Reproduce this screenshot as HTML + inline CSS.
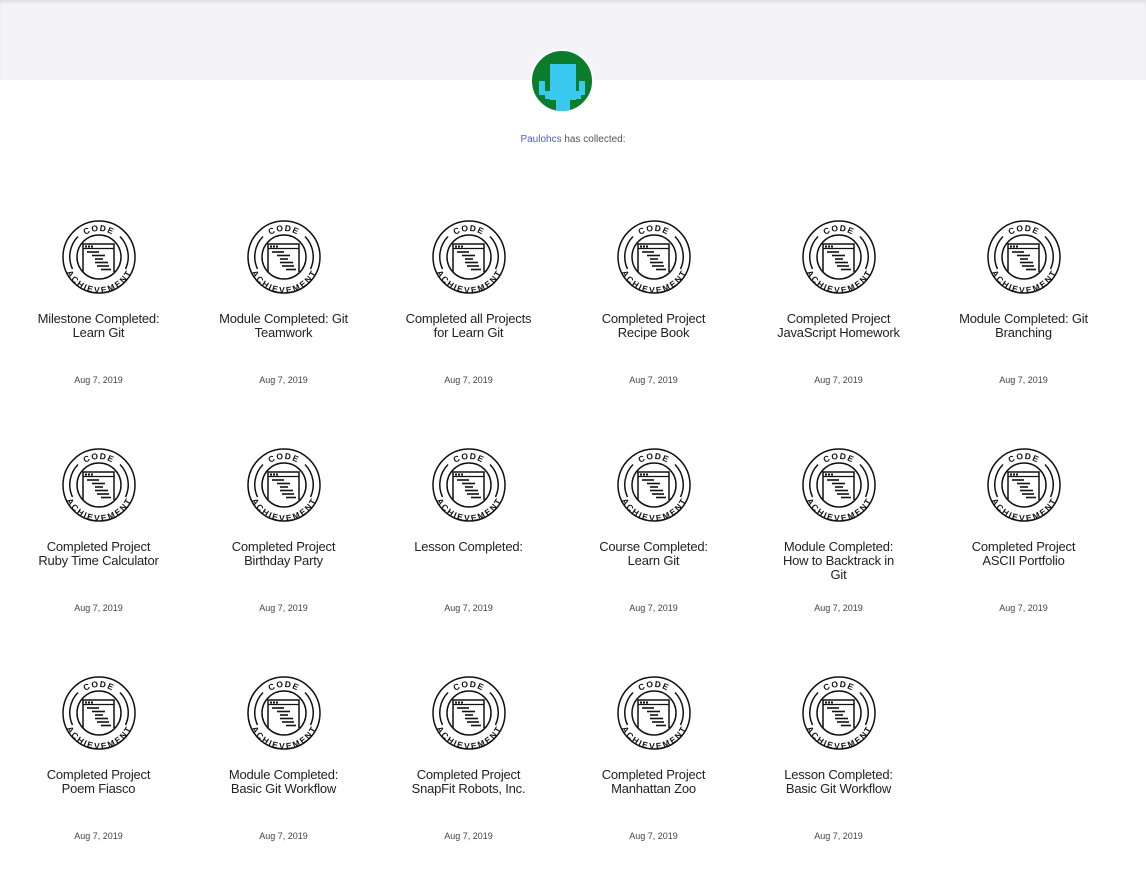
<!DOCTYPE html>
<html><head><meta charset="utf-8"><style>
body{margin:0;width:1146px;height:877px;background:#fff;font-family:"Liberation Sans",sans-serif;position:relative;overflow:hidden}
.hdr{position:absolute;left:0;top:0;width:1146px;height:80px;background:#f4f4f8;box-shadow:inset 0 3px 3px -1px #ddd}
.av{position:absolute;left:530px;top:49px;width:60px;height:60px;border-radius:50%;background:#0b7c2c;border:2px solid #fff;overflow:hidden}
.av i{position:absolute;background:#38c8f0}
.who{position:absolute;top:134px;left:0;width:1146px;text-align:center;font-size:10px;color:#555}
.who span{color:#4a5fd8}
.card{position:absolute;width:185px;text-align:center}
.card svg{display:block;margin:0 auto}
.t{font-size:13px;color:#222;line-height:14px;margin-top:15px;height:56px;padding:0 27px;letter-spacing:-0.2px}
.d{font-size:9px;color:#444;margin-top:7px}
</style></head><body>
<div class="hdr"></div>
<div class="av"><i style="left:18px;top:13px;width:26px;height:36px"></i><i style="left:7px;top:30px;width:6px;height:14px"></i><i style="left:47px;top:30px;width:6px;height:14px"></i><i style="left:13px;top:40px;width:36px;height:8px"></i><i style="left:24px;top:47px;width:14px;height:13px"></i></div>
<div class="who"><span>Paulohcs</span> has collected:</div>
<svg width="0" height="0" style="position:absolute"><defs>
<symbol id="b" viewBox="0 0 80 80">
<circle cx="40" cy="40" r="36" fill="none" stroke="#111" stroke-width="1.5"/>
<path d="M13.5 52 A29 29 0 0 1 19 19.5 M61 19.5 A29 29 0 0 1 66.5 52" fill="none" stroke="#111" stroke-width="1.5"/>
<circle cx="40" cy="40" r="22" fill="none" stroke="#111" stroke-width="1.5"/>
<path d="M24 55 V27 H55 V55" fill="none" stroke="#111" stroke-width="1.5"/>
<line x1="24" y1="31.5" x2="55" y2="31.5" stroke="#111" stroke-width="1.2"/>
<rect x="26" y="28.5" width="2" height="2" fill="#111"/><rect x="29" y="28.5" width="2" height="2" fill="#111"/><rect x="32" y="28.5" width="2" height="2" fill="#111"/>
<g stroke="#111" stroke-width="1.6"><line x1="28" y1="35" x2="40" y2="35"/><line x1="33" y1="38.5" x2="46" y2="38.5"/><line x1="36" y1="42" x2="44" y2="42"/><line x1="36" y1="45.5" x2="49" y2="45.5"/><line x1="38" y1="49" x2="50" y2="49"/><line x1="42" y1="52.5" x2="52" y2="52.5"/></g>
</symbol></defs></svg>
<div id="g"></div>
<script>
var items=[["Milestone Completed: Learn Git"],["Module Completed: Git Teamwork"],["Completed all Projects for Learn Git"],["Completed Project Recipe Book"],["Completed Project JavaScript Homework"],["Module Completed: Git Branching"],["Completed Project Ruby Time Calculator"],["Completed Project Birthday Party"],["Lesson Completed:"],["Course Completed: Learn Git"],["Module Completed:<br>How to Backtrack in<br>Git"],["Completed Project ASCII Portfolio"],["Completed Project Poem Fiasco"],["Module Completed: Basic Git Workflow"],["Completed Project SnapFit Robots, Inc."],["Completed Project Manhattan Zoo"],["Lesson Completed: Basic Git Workflow"]];
var h="";
items.forEach(function(it,i){var c=i%6,r=Math.floor(i/6);
var pad=(i==10)?'style="padding:0 10px"':'';
h+='<div class="card" style="left:'+(6+c*185)+'px;top:'+(217+r*228)+'px"><svg width="80" height="80" viewBox="0 0 80 80"><use href="#b"/>'+
'<path id="t'+i+'" d="M14 40 A26 26 0 0 1 66 40" fill="none"/><path id="u'+i+'" d="M9 40 A31 31 0 0 0 71 40" fill="none"/>'+
'<text font-family="Liberation Sans" font-weight="bold" font-size="8.5" letter-spacing="1.2" fill="#111"><textPath href="#t'+i+'" startOffset="50%" text-anchor="middle">CODE</textPath></text>'+
'<text font-family="Liberation Sans" font-weight="bold" font-size="8.5" letter-spacing="0.8" fill="#111" dy="5"><textPath href="#u'+i+'" startOffset="50%" text-anchor="middle">ACHIEVEMENT</textPath></text></svg>'+
'<div class="t" '+pad+'>'+it[0]+'</div><div class="d">Aug 7, 2019</div></div>';});
document.getElementById("g").innerHTML=h;
</script>
</body></html>
